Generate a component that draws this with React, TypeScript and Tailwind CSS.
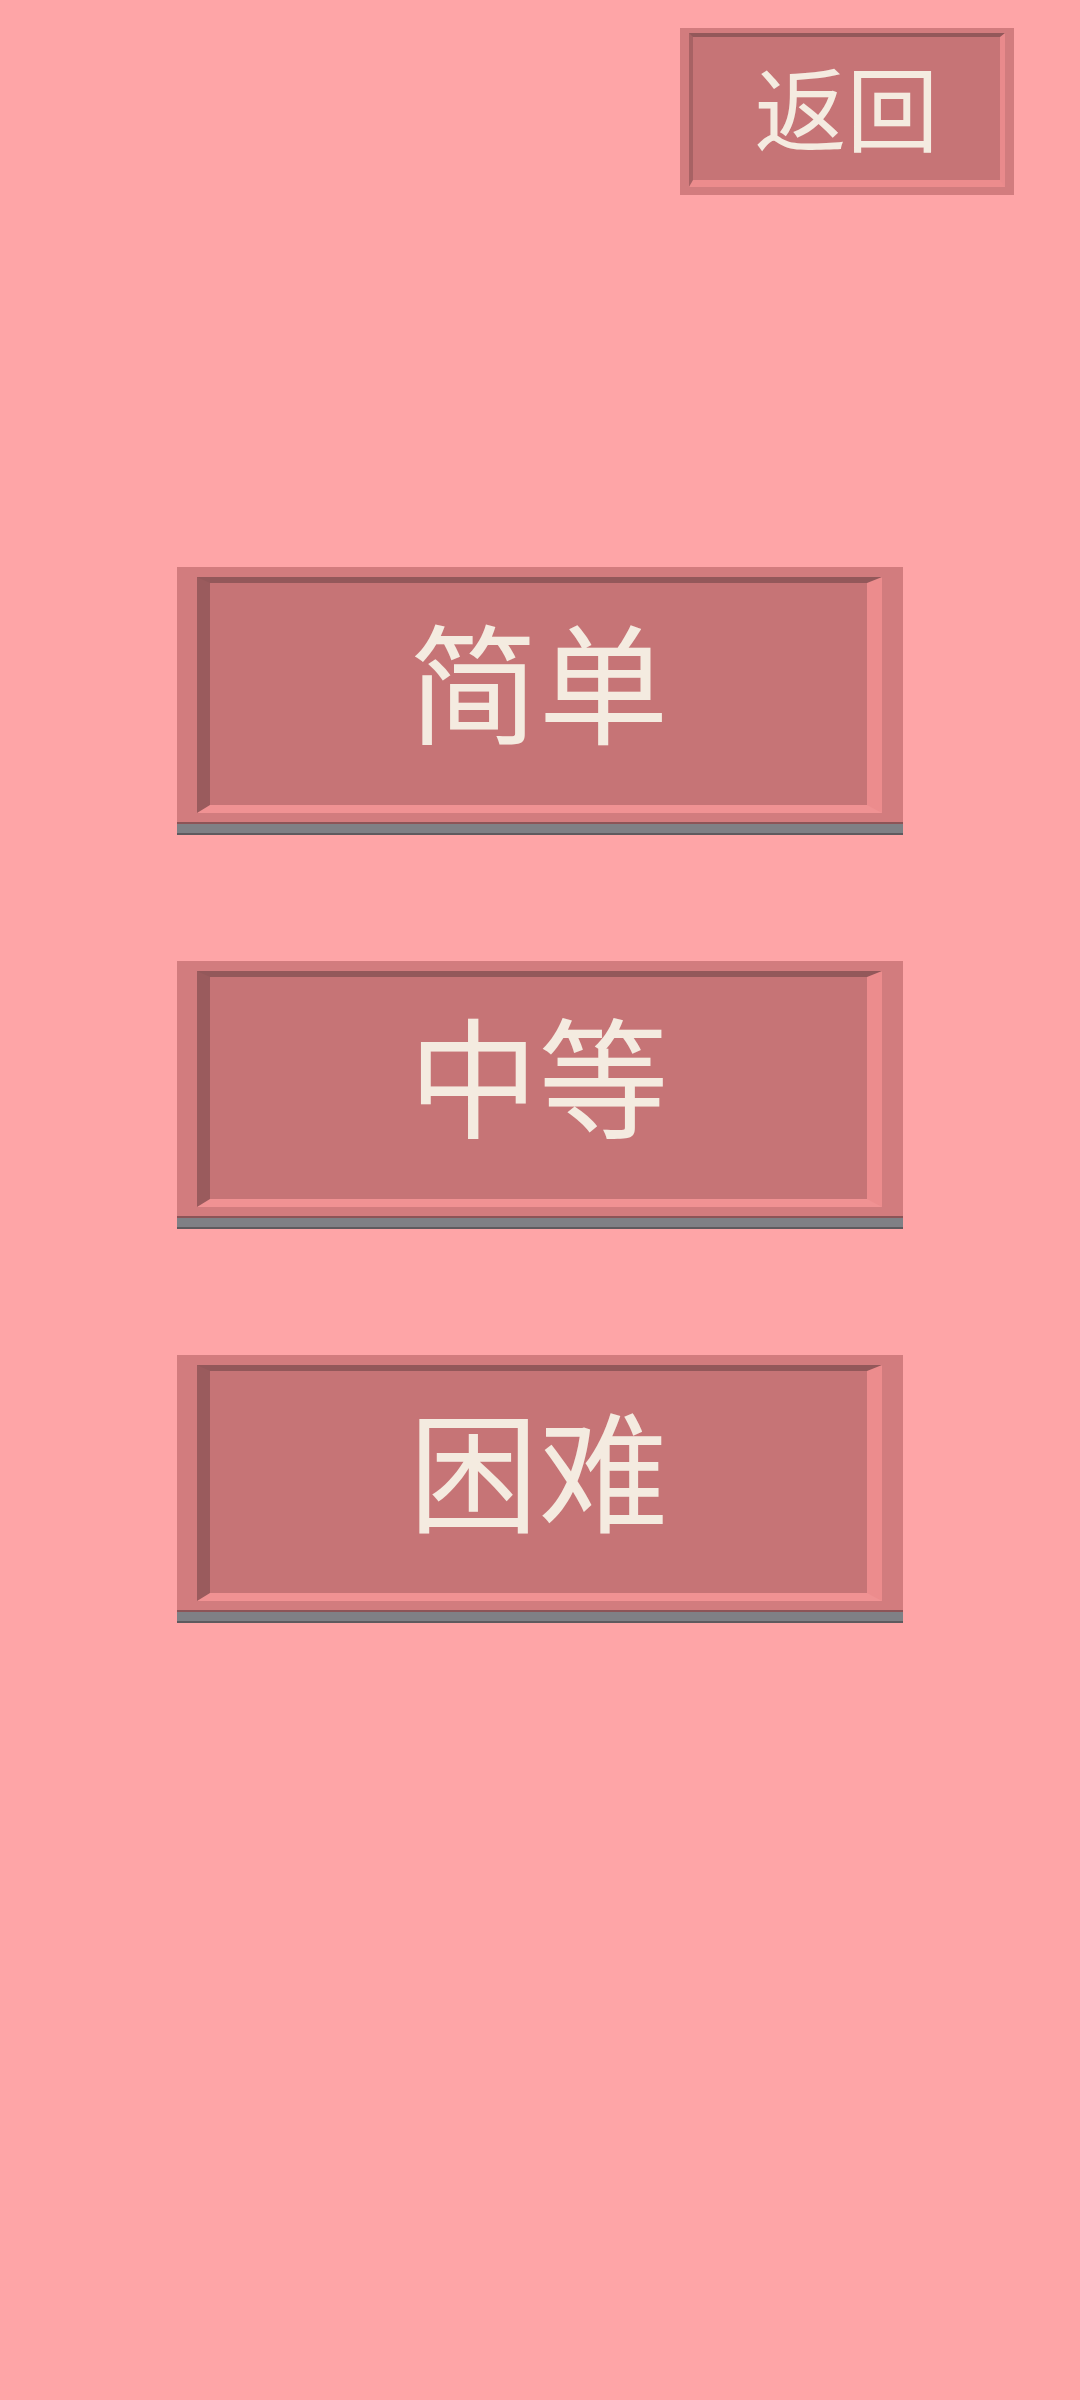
const font = { fontFamily: '"Noto Sans CJK SC", "Noto Sans", sans-serif' };

function BevelButton({ label, big }: { label: string; big?: boolean }) {
  if (!big) {
    return (
      <button
        type="button"
        className="block h-[167px] w-[334px] bg-[#d27c7e] pt-[5px] pr-[9px] pb-[8px] pl-[9px]"
      >
        <div
          lang="zh-CN"
          className="flex h-full w-full items-center justify-center border-t-[4px] border-r-[5px] border-b-[7px] border-l-[4px] border-t-[#93585a] border-r-[#e98a8c] border-b-[#ec8c8d] border-l-[#a76264] bg-[#c67476] pb-[8px] text-[92px] leading-none text-[#f4ebe0]"
          style={font}
        >
          {label}
        </div>
      </button>
    );
  }
  return (
    <button type="button" className="block w-[726px]">
      <div className="h-[255px] bg-[#d27c7e] pt-[10px] pr-[21px] pb-[9px] pl-[20px]">
        <div
          lang="zh-CN"
          className="flex h-full w-full items-center justify-center border-t-[6px] border-r-[15px] border-b-[8px] border-l-[13px] border-t-[#93585a] border-r-[#ec8c8d] border-b-[#f09293] border-l-[#9a5b5d] bg-[#c67476] pb-[34px] text-[130px] leading-none text-[#f4ebe0]"
          style={font}
        >
          {label}
        </div>
      </div>
      <div className="h-[2px] bg-[#8c5457]" />
      <div className="h-[9px] bg-[#7f8085]" />
      <div className="h-[2px] bg-[#5e5a5e]" />
    </button>
  );
}

export default function App() {
  return (
    <div lang="zh-CN" className="flex min-h-[2400px] w-full flex-col bg-[#fea5a7]">
      <div className="flex justify-end pt-[28px] pr-[66px]">
        <BevelButton label="返回" />
      </div>
      <div className="mt-[372px] flex flex-col items-center gap-[126px]">
        <BevelButton label="简单" big />
        <BevelButton label="中等" big />
        <BevelButton label="困难" big />
      </div>
    </div>
  );
}
